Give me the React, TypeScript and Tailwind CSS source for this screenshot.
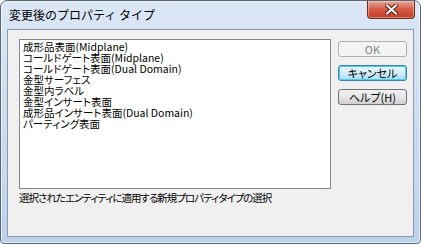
const items = [
  '成形品表面(Midplane)',
  'コールドゲート表面(Midplane)',
  'コールドゲート表面(Dual Domain)',
  '金型サーフェス',
  '金型内ラベル',
  '金型インサート表面',
  '成形品インサート表面(Dual Domain)',
  'パーティング表面',
];

const jp = "font-['Noto_Sans_CJK_JP',sans-serif]";

const CloseIcon = () => (
  <svg width="13" height="11" viewBox="0 0 13 11">
    <path d="M2 1.5 L11 9.5 M11 1.5 L2 9.5" stroke="#5a1c12" strokeWidth="4" strokeLinecap="square" />
    <path d="M2 1.5 L11 9.5 M11 1.5 L2 9.5" stroke="#ffffff" strokeWidth="2" strokeLinecap="square" />
  </svg>
);

export default function App() {
  return (
    <div className="w-[421px] h-[244px] bg-white">
      {/* ウィンドウ枠 */}
      <div className="w-full h-full flex flex-col border border-[#5b6672] rounded-t-[7px] rounded-b-[4px] bg-gradient-to-b from-[#dbe7f5] to-[#bcd2eb] shadow-[inset_0_0_0_1px_rgba(255,255,255,0.6)]">
        {/* タイトルバー */}
        <div className="h-[28px] flex items-start justify-between pl-[8px] pr-[5px]">
          <span className={`${jp} text-[12px] leading-[28px] text-black`}>変更後のプロパティ タイプ</span>
          <button className="w-[48px] h-[18px] flex items-center justify-center border border-t-0 border-[#6e2b1f] rounded-b-[4px] bg-gradient-to-b from-[#e9a899] via-[#d35a44] to-[#c53b22] shadow-[inset_0_0_0_1px_rgba(255,255,255,0.35)]">
            <CloseIcon />
          </button>
        </div>

        {/* クライアント領域 */}
        <div className="mx-[6px] mb-[6px] flex-1 flex flex-col border border-[#8a9bae] bg-[#f0f0f0] pt-[9px] pl-[11px]">
          <div className="flex items-start">
            <div className={`${jp} w-[312px] h-[150px] border border-[#828790] bg-white pl-[3px] pt-[1px] text-[10.5px] leading-[11px] text-black [font-feature-settings:'palt']`}>
              {items.map((t) => (
                <div key={t} className="h-[11px] whitespace-nowrap">{t}</div>
              ))}
            </div>
            <div className={`${jp} ml-[7px] mt-[2px] flex flex-col gap-[8px] text-[11px] [font-feature-settings:'palt']`}>
              <button className="w-[69px] h-[16px] flex items-center justify-center border border-[#adb2b5] rounded-[3px] bg-[#f4f4f4] text-[#838383] leading-none">OK</button>
              <button className="w-[69px] h-[16px] flex items-center justify-center border border-[#3c7fb1] rounded-[3px] bg-gradient-to-b from-[#eaf6fd] via-[#d4eefc] to-[#a9daf5] text-black leading-none shadow-[inset_0_0_0_1px_#48d0f3]">キャンセル</button>
              <button className="w-[69px] h-[16px] flex items-center justify-center border border-[#707070] rounded-[3px] bg-gradient-to-b from-[#f2f2f2] via-[#e6e6e6] to-[#cfcfcf] text-black leading-none">ヘルプ(H)</button>
            </div>
          </div>
          <div className={`${jp} mt-[2px] text-[10.5px] leading-[14px] tracking-[-1px] text-black [font-feature-settings:'palt']`}>
            選択されたエンティティに適用する新規プロパティタイプの選択
          </div>
        </div>
      </div>
    </div>
  );
}
